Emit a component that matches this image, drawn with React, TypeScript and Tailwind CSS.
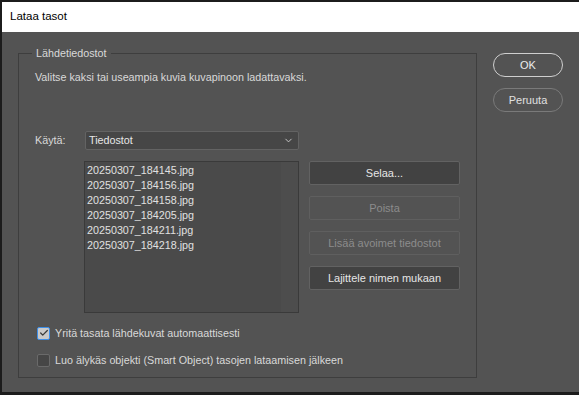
import { Check, ChevronDown } from 'lucide-react';

const files = [
    '20250307_184145.jpg',
    '20250307_184156.jpg',
    '20250307_184158.jpg',
    '20250307_184205.jpg',
    '20250307_184211.jpg',
    '20250307_184218.jpg',
];

function SideButton({ label, disabled }: { label: string; disabled?: boolean }) {
    return (
        <div
            className={`h-[24px] w-[151px] flex items-center justify-center rounded-[2px] border text-[11px] ${
                disabled
                    ? 'border-[#5f5f5f] bg-[#535353] text-[#8c8c8c]'
                    : 'border-[#626262] bg-[#424242] text-[#e6e6e6]'
            }`}
        >
            {label}
        </div>
    );
}

export default function App() {
    return (
        <div
            className="w-[579px] h-[395px] flex flex-col bg-[#535353] border-t-2 border-l-2 border-b-[3px] border-[#1c1c1c] overflow-hidden"
            style={{ fontFamily: '"Liberation Sans", Arial, sans-serif' }}
        >
            {/* Title bar */}
            <div className="h-[30px] bg-white flex items-center pl-[8px] text-[11.5px] text-black">
                Lataa tasot
            </div>

            <div className="flex flex-1 pl-[16px] pt-[21px]">
                {/* Group box */}
                <div className="relative w-[459px] h-[325px] border border-[#3e3e3e] pl-[16px] pt-[15px] text-[10.75px]">
                    <span className="absolute left-[13px] top-[-9px] px-[4px] bg-[#535353] leading-[16px] text-[#d9d9d9]">
                        Lähdetiedostot
                    </span>
                    <div className="leading-[16px] text-[#d9d9d9]">
                        Valitse kaksi tai useampia kuvia kuvapinoon ladattavaksi.
                    </div>

                    <div className="flex items-center mt-[46px]">
                        <span className="w-[50px] text-[#d9d9d9]">Käytä:</span>
                        <div className="w-[214px] h-[19px] flex items-center justify-between rounded-[2px] border border-[#636363] bg-[#464646] pl-[3px] pr-[4px] text-[#e6e6e6]">
                            <span>Tiedostot</span>
                            <ChevronDown size={11} strokeWidth={2} className="text-[#cfcfcf]" />
                        </div>
                    </div>

                    <div className="flex mt-[11px] gap-[10px]">
                        <div className="ml-[49px] w-[215px] h-[152px] border border-[#3a3a3a] bg-[#4a4a4a] flex">
                            <div className="flex-1 flex flex-col pl-[2px] pt-[1px]">
                                {files.map(f => (
                                    <div key={f} className="h-[15px] leading-[15px] text-[#e0e0e0]">
                                        {f}
                                    </div>
                                ))}
                            </div>
                            <div className="w-[17px] bg-[#4d4d4d]" />
                        </div>
                        <div className="flex flex-col gap-[11px]">
                            <SideButton label="Selaa..." />
                            <SideButton label="Poista" disabled />
                            <SideButton label="Lisää avoimet tiedostot" disabled />
                            <SideButton label="Lajittele nimen mukaan" />
                        </div>
                    </div>

                    <div className="flex flex-col gap-[9px] mt-[11px] pl-[2px]">
                        <label className="flex items-center gap-[5px] h-[18px] text-[#d9d9d9]">
                            <span className="w-[13px] h-[13px] flex items-center justify-center rounded-[2px] border border-[#3d8ee8] bg-[#c9c9c9]">
                                <Check size={10} strokeWidth={3} className="text-[#3a3a3a]" />
                            </span>
                            Yritä tasata lähdekuvat automaattisesti
                        </label>
                        <label className="flex items-center gap-[5px] h-[18px] text-[#d9d9d9]">
                            <span className="w-[13px] h-[13px] rounded-[2px] border border-[#6a6a6a] bg-[#464646]" />
                            Luo älykäs objekti (Smart Object) tasojen lataamisen jälkeen
                        </label>
                    </div>
                </div>

                {/* OK / Cancel */}
                <div className="flex flex-col gap-[11px] ml-[16px] text-[11px]">
                    <div className="w-[70px] h-[24px] flex items-center justify-center rounded-full border border-[#cfcfcf] text-[#ececec]">
                        OK
                    </div>
                    <div className="w-[70px] h-[24px] flex items-center justify-center rounded-full border border-[#7a7a7a] text-[#e0e0e0]">
                        Peruuta
                    </div>
                </div>
            </div>
        </div>
    );
}
